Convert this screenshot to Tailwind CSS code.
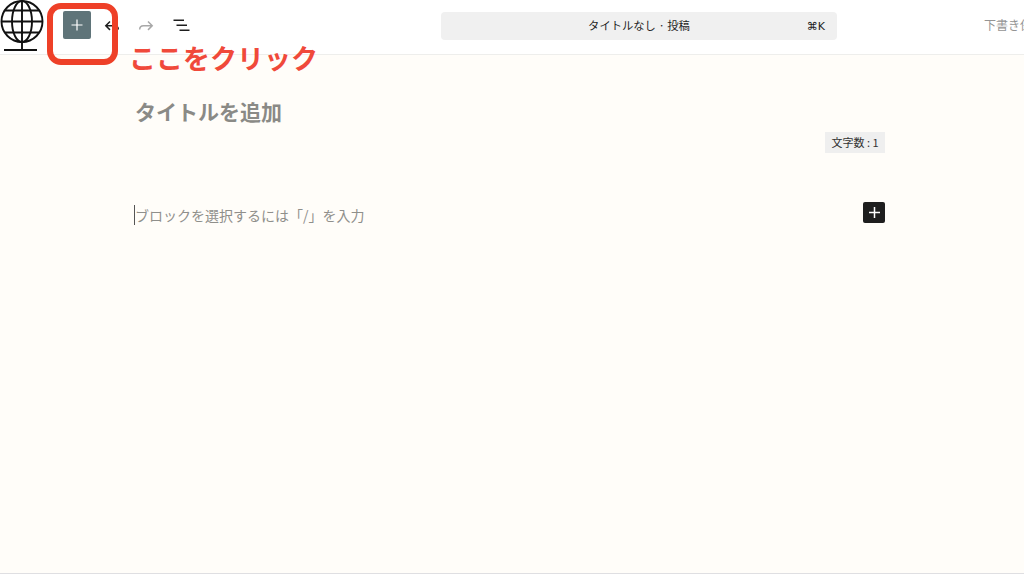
<!DOCTYPE html>
<html lang="ja">
<head>
<meta charset="utf-8">
<script src="https://cdn.jsdelivr.net/npm/@tailwindcss/browser@4"></script>
</head>
<body class="bg-white">
<div class="relative w-[1024px] h-[578px] overflow-hidden flex flex-col bg-white font-['Noto_Sans_CJK_JP','Noto_Sans',sans-serif]">
  <header class="relative h-[55px] shrink-0 bg-white border-b border-[#eeeeec] flex items-center">
    <svg class="w-[46px] h-[52px] shrink-0 -mt-[3px]" viewBox="0 0 46 52" fill="none" stroke="#111" stroke-width="1.9">
      <circle cx="22" cy="21.5" r="20.5"/>
      <ellipse cx="22" cy="21.5" rx="10" ry="20.5"/>
      <path d="M22 0V50M1.5 21.5H42.5M5 10.5H39M5 32.5H39M4 50H37"/>
    </svg>
    <div class="ml-[17px] w-[28px] h-[28px] -mt-[4px] rounded-[2px] bg-[#5f7479] flex items-center justify-center">
      <svg class="w-[12px] h-[12px]" viewBox="0 0 12 12" stroke="#fff" stroke-width="1.2"><path d="M6 0.5V11.5M0.5 6H11.5"/></svg>
    </div>
    <div class="ml-[13px] -mt-[3px] flex items-center">
      <svg class="w-[16px] h-[14px]" viewBox="0 0 16 14" fill="none" stroke="#1e1e1e" stroke-width="1.5"><path d="M6 2.5L1.8 6.7L6 10.9M2 6.7H10.5C13 6.7 14.3 8 14.3 10.5"/></svg>
      <svg class="ml-[18px] w-[16px] h-[14px]" viewBox="0 0 16 14" fill="none" stroke="#a8a8a8" stroke-width="1.5"><path d="M10 2.5L14.2 6.7L10 10.9M14 6.7H5.5C3 6.7 1.7 8 1.7 10.5"/></svg>
      <svg class="ml-[19px] w-[17px] h-[13px]" viewBox="0 0 17 13" fill="none" stroke="#1e1e1e" stroke-width="1.5"><path d="M0.5 1.2H11M3.5 6.2H14M6.5 11.2H16.5"/></svg>
    </div>
    <div class="absolute left-[441px] top-[12px] w-[396px] h-[28px] rounded-[4px] bg-[#f0f0f0] flex items-center justify-center">
      <span class="text-[11.3px] leading-none text-[#1e1e1e]">タイトルなし · 投稿</span>
      <span class="absolute right-[12px] text-[11px] leading-none text-[#1e1e1e] font-['DejaVu_Sans',sans-serif]">⌘K</span>
    </div>
    <span class="absolute left-[984px] top-[19px] whitespace-nowrap text-[12px] leading-none text-[#949494]">下書き保存</span>
  </header>
  <main class="relative flex-1 bg-[#fffdf9] border-b border-[#dfdfe2]">
    <h1 class="absolute left-[135px] top-[42px] text-[21px] leading-[28px] font-bold text-[#8a8a86]">タイトルを追加</h1>
    <div class="absolute left-[825px] top-[77px] w-[60px] h-[21px] bg-[#efefef] flex items-center justify-center text-[11px] leading-none text-[#333]">文字数 : 1</div>
    <div class="absolute left-[134px] top-[150px] w-px h-[20px] bg-[#555]"></div>
    <p class="absolute left-[135px] top-[149px] text-[14px] leading-[22px] text-[#8f8f8b] whitespace-nowrap">ブロックを選択するには「/」を入力</p>
    <div class="absolute left-[863px] top-[147px] w-[22px] h-[21px] rounded-[2px] bg-[#1e1e1e] flex items-center justify-center">
      <svg class="w-[11px] h-[11px]" viewBox="0 0 11 11" stroke="#fff" stroke-width="1.5"><path d="M5.5 0V11M0 5.5H11"/></svg>
    </div>
  </main>
  <div class="h-[4px] shrink-0 bg-white"></div>
  <div class="absolute left-[47px] top-[3px] w-[71px] h-[62px] rounded-[14px] border-[6px] border-[#ee4028]"></div>
  <div class="absolute left-[129px] top-[40px] text-[27px] leading-[36px] font-bold text-[#f0493a] whitespace-nowrap">ここをクリック</div>
</div>
</body>
</html>
